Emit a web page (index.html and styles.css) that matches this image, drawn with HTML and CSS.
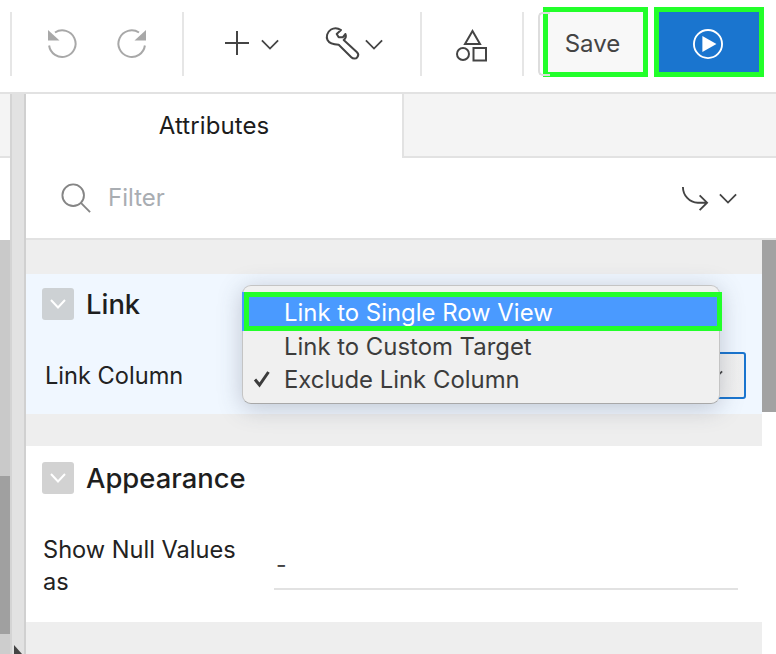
FILE: index.html
```html
<!DOCTYPE html>
<html lang="en">
<head>
<meta charset="utf-8">
<title>Attributes</title>
<link rel="stylesheet" href="styles.css">
</head>
<body>
<div class="app">
  <header class="toolbar">
    <div class="sep"></div>
    <div class="group history">
      <svg class="ico-28" viewBox="0 0 28 28"><path class="st-grey" d="M7 2.500A13.300 13.300 0 1 1 1.100 15.500"/><path class="fill-grey" d="M0 0L11.500 10.500H0Z"/></svg>
      <svg class="ico-28" viewBox="0 0 28 28"><path class="st-grey" d="M21 2.500A13.300 13.300 0 1 0 26.900 15.500"/><path class="fill-grey" d="M28 0L16.500 10.500H28Z"/></svg>
    </div>
    <div class="sep"></div>
    <div class="group tools">
      <div class="tool tool-add">
        <svg class="ico-plus" viewBox="0 0 24 24"><path class="st-dark" d="M12 0V24M0 12H24"/></svg>
        <svg class="ico-chev" viewBox="0 0 20 12"><path class="st-dark" d="M1 1.500L10 10.500L19 1.500"/></svg>
      </div>
      <div class="tool tool-wrench">
        <svg class="ico-wrench" viewBox="0 0 32 32"><path class="st-wrench" d="M15 2C12 0 8 -0.300 5 1.500C1 4 0 9 1.500 12C3 15 7 16.500 12.700 16.700L25.300 29.300C27 31 30 31 31.200 29.300C32.500 27.700 32.500 25.700 31 24.300L17.700 12C19.500 10.500 20.500 8.500 19.500 6L16.700 9.300L12.700 9.300L10.700 6Z"/></svg>
        <svg class="ico-chev" viewBox="0 0 20 12"><path class="st-dark" d="M1 1.500L10 10.500L19 1.500"/></svg>
      </div>
    </div>
    <div class="sep"></div>
    <div class="group shapes">
      <svg class="ico-shapes" viewBox="0 0 32 32"><path class="st-dark" d="M16.500 2L24 15H9Z"/><circle class="st-dark" cx="7" cy="25" r="6"/><rect class="st-dark" x="17.500" y="19" width="12.500" height="12.500"/></svg>
    </div>
    <div class="sep"></div>
    <div class="save">Save</div>
    <div class="run">
      <svg class="ico-play" viewBox="0 0 32 32"><circle class="st-white" cx="16" cy="16" r="15"/><path class="fill-white" d="M10 7.500L25 16L10 24.500Z"/></svg>
    </div>
  </header>
  <main class="main">
    <aside class="side">
      <div class="side-top"></div>
      <div class="side-white"></div>
      <div class="side-mid"></div>
      <div class="side-dark"></div>
      <div class="side-end"></div>
    </aside>
    <div class="gutter"><span class="gutter-arrow"></span></div>
    <section class="panel">
      <div class="tabs">
        <div class="tab">Attributes</div>
        <div class="tabs-rest"></div>
      </div>
      <div class="filter">
        <svg class="ico-search" viewBox="0 0 32 32"><circle class="st-mid" cx="13" cy="13" r="11.500"/><path class="st-mid" d="M21.500 21.500L31 31"/></svg>
        <span class="filter-text">Filter</span>
        <svg class="ico-route" viewBox="0 0 30 28"><path class="st-dark" d="M2 1C2 10 9 18 18 18H28M20 10L28 18L20 26"/></svg>
        <svg class="ico-chev ico-chev-route" viewBox="0 0 20 12"><path class="st-dark" d="M1 1.500L10 10.500L19 1.500"/></svg>
      </div>
      <div class="body">
        <div class="content">
          <div class="gap gap-first"></div>
          <div class="region region-link">
            <div class="region-head">
              <span class="toggle toggle-link"><svg class="ico-toggle" viewBox="0 0 16 10"><path class="st-white" d="M1 1L8 8.500L15 1"/></svg></span>
              <h2 class="region-title">Link</h2>
            </div>
            <div class="link-row">
              <span class="label">Link Column</span>
              <div class="select"><svg class="ico-chev" viewBox="0 0 20 12"><path class="st-dark" d="M1 1.500L10 10.500L19 1.500"/></svg></div>
            </div>
            <div class="menu">
              <div class="menu-item menu-active">Link to Single Row View</div>
              <div class="menu-item menu-second">Link to Custom Target</div>
              <div class="menu-item menu-third">
                <svg class="ico-check" viewBox="0 0 18 18"><path class="st-check" d="M2 9.500L6.500 15L15.500 2"/></svg>
                Exclude Link Column
              </div>
            </div>
          </div>
          <div class="gap gap-mid"></div>
          <div class="region region-appearance">
            <div class="region-head">
              <span class="toggle"><svg class="ico-toggle" viewBox="0 0 16 10"><path class="st-white" d="M1 1L8 8.500L15 1"/></svg></span>
              <h2 class="region-title">Appearance</h2>
            </div>
            <div class="null-row">
              <span class="label label-null">Show Null Values as</span>
              <div class="text-input">-</div>
            </div>
          </div>
          <div class="gap gap-last"></div>
        </div>
        <div class="scroll"><div class="thumb"></div></div>
      </div>
    </section>
  </main>
</div>
</body>
</html>
```
FILE: styles.css
```css
* { box-sizing: border-box; }
html, body { margin: 0; padding: 0; background: #fff; }
body { font-family: Inter, "Noto Sans", "Liberation Sans", sans-serif; color: #222; }
svg { display: block; flex: none; overflow: visible; }
.app { width: 776px; height: 654px; overflow: hidden; display: flex; flex-direction: column; }

.st-grey, .st-dark, .st-white, .st-mid, .st-check, .st-wrench { fill: none; }
.st-grey { stroke: #a8a8a8; stroke-width: 2; }
.st-dark { stroke: #444; stroke-width: 2; }
.st-wrench { stroke: #444; stroke-width: 2; stroke-linejoin: round; }
.st-white { stroke: #fff; stroke-width: 2; }
.st-mid { stroke: #858585; stroke-width: 2; }
.st-check { stroke: #3c3c3c; stroke-width: 3; }
.fill-grey { fill: #a8a8a8; }
.fill-white { fill: #fff; }

.toolbar { height: 94px; flex: none; display: flex; align-items: flex-start; padding-left: 10px; border-bottom: 2px solid #e2e2e2; }
.sep { width: 2px; height: 64px; margin-top: 12px; background: #e6e6e6; flex: none; }
.group { height: 88px; display: flex; align-items: center; flex: none; }
.history { width: 170px; justify-content: center; gap: 42px; }
.ico-28 { width: 28px; height: 28px; }
.tools { width: 236px; padding-left: 41px; gap: 47px; }
.tool { display: flex; align-items: center; }
.tool-add { gap: 12px; }
.tool-wrench { gap: 7px; }
.ico-plus { width: 24px; height: 24px; margin-top: -2px; }
.ico-chev { width: 18px; height: 11px; }
.ico-wrench { width: 32px; height: 32px; }
.shapes { width: 100px; justify-content: center; }
.ico-shapes { width: 32px; height: 32px; margin-top: 1px; }
.save { position: relative; width: 105px; height: 70px; margin: 7px 0 0 19px; padding: 3px 6px 0 0; border: 5px solid #22ff2a; background: #f8f8f8; color: #444; font-size: 24px; display: flex; align-items: center; justify-content: center; flex: none; }
.save::before { content: ""; position: absolute; left: -10px; top: 0; width: 10px; height: 60px; border: 2px solid #ddd; border-right: 0; border-radius: 5px 0 0 5px; }
.run { width: 110px; height: 70px; margin: 7px 0 0 6px; padding: 4px 2px 0 0; border: 5px solid #22ff2a; background: #1a75cf; display: flex; align-items: center; justify-content: center; flex: none; }
.ico-play { width: 30px; height: 30px; }

.main { flex: 1; display: flex; min-height: 0; }
.side { width: 10px; flex: none; display: flex; flex-direction: column; }
.side-top { height: 62px; background: #f4f4f4; }
.side-white { height: 84px; border-top: 2px solid #e2e2e2; background: #fff; }
.side-mid { height: 236px; background: #c9c9c9; }
.side-dark { height: 158px; background: #a0a0a0; }
.side-end { flex: 1; background: #cdcdcd; }
.gutter { position: relative; width: 16px; flex: none; background: #e2e2e2; border-left: 2px solid #d4d4d4; border-right: 2px solid #d0d0d0; }
.gutter-arrow { position: absolute; left: 2px; bottom: -9px; width: 0; height: 0; border-left: 8px solid #444; border-top: 9px solid transparent; border-bottom: 9px solid transparent; }

.panel { flex: 1; min-width: 0; display: flex; flex-direction: column; }
.tabs { height: 64px; flex: none; display: flex; }
.tab { width: 378px; height: 64px; padding-bottom: 2px; background: #fff; border-right: 2px solid #e2e2e2; display: flex; align-items: center; justify-content: center; font-size: 24px; letter-spacing: 0.1px; color: #1c1c1c; }
.tabs-rest { flex: 1; height: 64px; background: #f4f4f4; border-bottom: 2px solid #e2e2e2; }
.filter { height: 82px; flex: none; border-bottom: 2px solid #e2e2e2; display: flex; align-items: center; padding-left: 35px; }
.ico-search { width: 30px; height: 30px; }
.filter-text { font-size: 24px; color: #a9adb2; margin-left: 17px; padding-bottom: 2px; flex: 1; }
.ico-route { width: 28px; height: 26px; margin-top: 2px; margin-left: -1px; }
.ico-chev-route { margin: 0 39px 0 10px; }

.body { flex: 1; display: flex; min-height: 0; }
.content { flex: 1; min-width: 0; display: flex; flex-direction: column; }
.scroll { width: 14px; flex: none; background: #fff; }
.thumb { height: 172px; background: #a2a2a2; }
.gap { background: #eeeeee; flex: none; }
.gap-first { height: 34px; }
.gap-mid { height: 32px; }
.gap-last { flex: 1; }
.region { flex: none; padding-top: 14px; position: relative; }
.region-link { height: 140px; background: #f0f7ff; }
.region-appearance { height: 176px; padding-top: 16px; background: #fff; }
.region-head { display: flex; align-items: center; gap: 12px; padding-left: 16px; height: 32px; }
.toggle { width: 32px; height: 32px; border-radius: 3px; background: #d2d2d2; display: flex; align-items: center; justify-content: center; flex: none; }
.toggle-link { background: #cdd1d4; }
.ico-toggle { width: 16px; height: 10px; }
.region-title { margin: 0; font-size: 27.4px; font-weight: 500; color: #1e1e1e; line-height: 32px; }
.link-row { display: flex; justify-content: space-between; align-items: center; padding: 32px 16px 0 19px; }
.label { font-size: 23.6px; color: #222; }
.select { width: 300px; height: 47px; border: 2px solid #1a75cf; border-radius: 3px; background: linear-gradient(90deg, #fff, #f0f0f0); display: flex; align-items: center; justify-content: flex-end; padding-right: 21px; }
.menu { position: absolute; left: 216px; top: 11px; width: 478px; height: 119px; padding-top: 6px; background: #f0f0f0; border-radius: 9px; border: 1px solid #c4c4c4; border-bottom-color: #a8a8a8; box-shadow: 0 4px 24px rgba(60, 70, 90, .28); font-size: 23.9px; color: #3c3c3c; }
.menu-item { display: flex; align-items: center; padding-left: 41px; padding-bottom: 2px; position: relative; }
.menu-active { height: 39px; padding-top: 3px; margin: 0 -1px; background: #4a9aff; color: #fff; padding-left: 42px; }
.menu-active::after { content: ""; position: absolute; left: 2px; right: -2px; top: 0; bottom: 0; border: 5px solid #22ff2a; }
.menu-second { height: 33px; }
.menu-third { height: 34px; padding-bottom: 4px; }
.ico-check { position: absolute; left: 10px; top: 6px; width: 18px; height: 18px; }
.null-row { display: flex; padding: 40px 24px 0 17px; align-items: flex-start; }
.label-null { width: 200px; margin-right: 31px; line-height: 32px; flex: none; }
.text-input { flex: 1; height: 56px; border-bottom: 2px solid #e2e2e2; font-size: 23px; padding: 17px 0 0 2px; color: #444; }
```
